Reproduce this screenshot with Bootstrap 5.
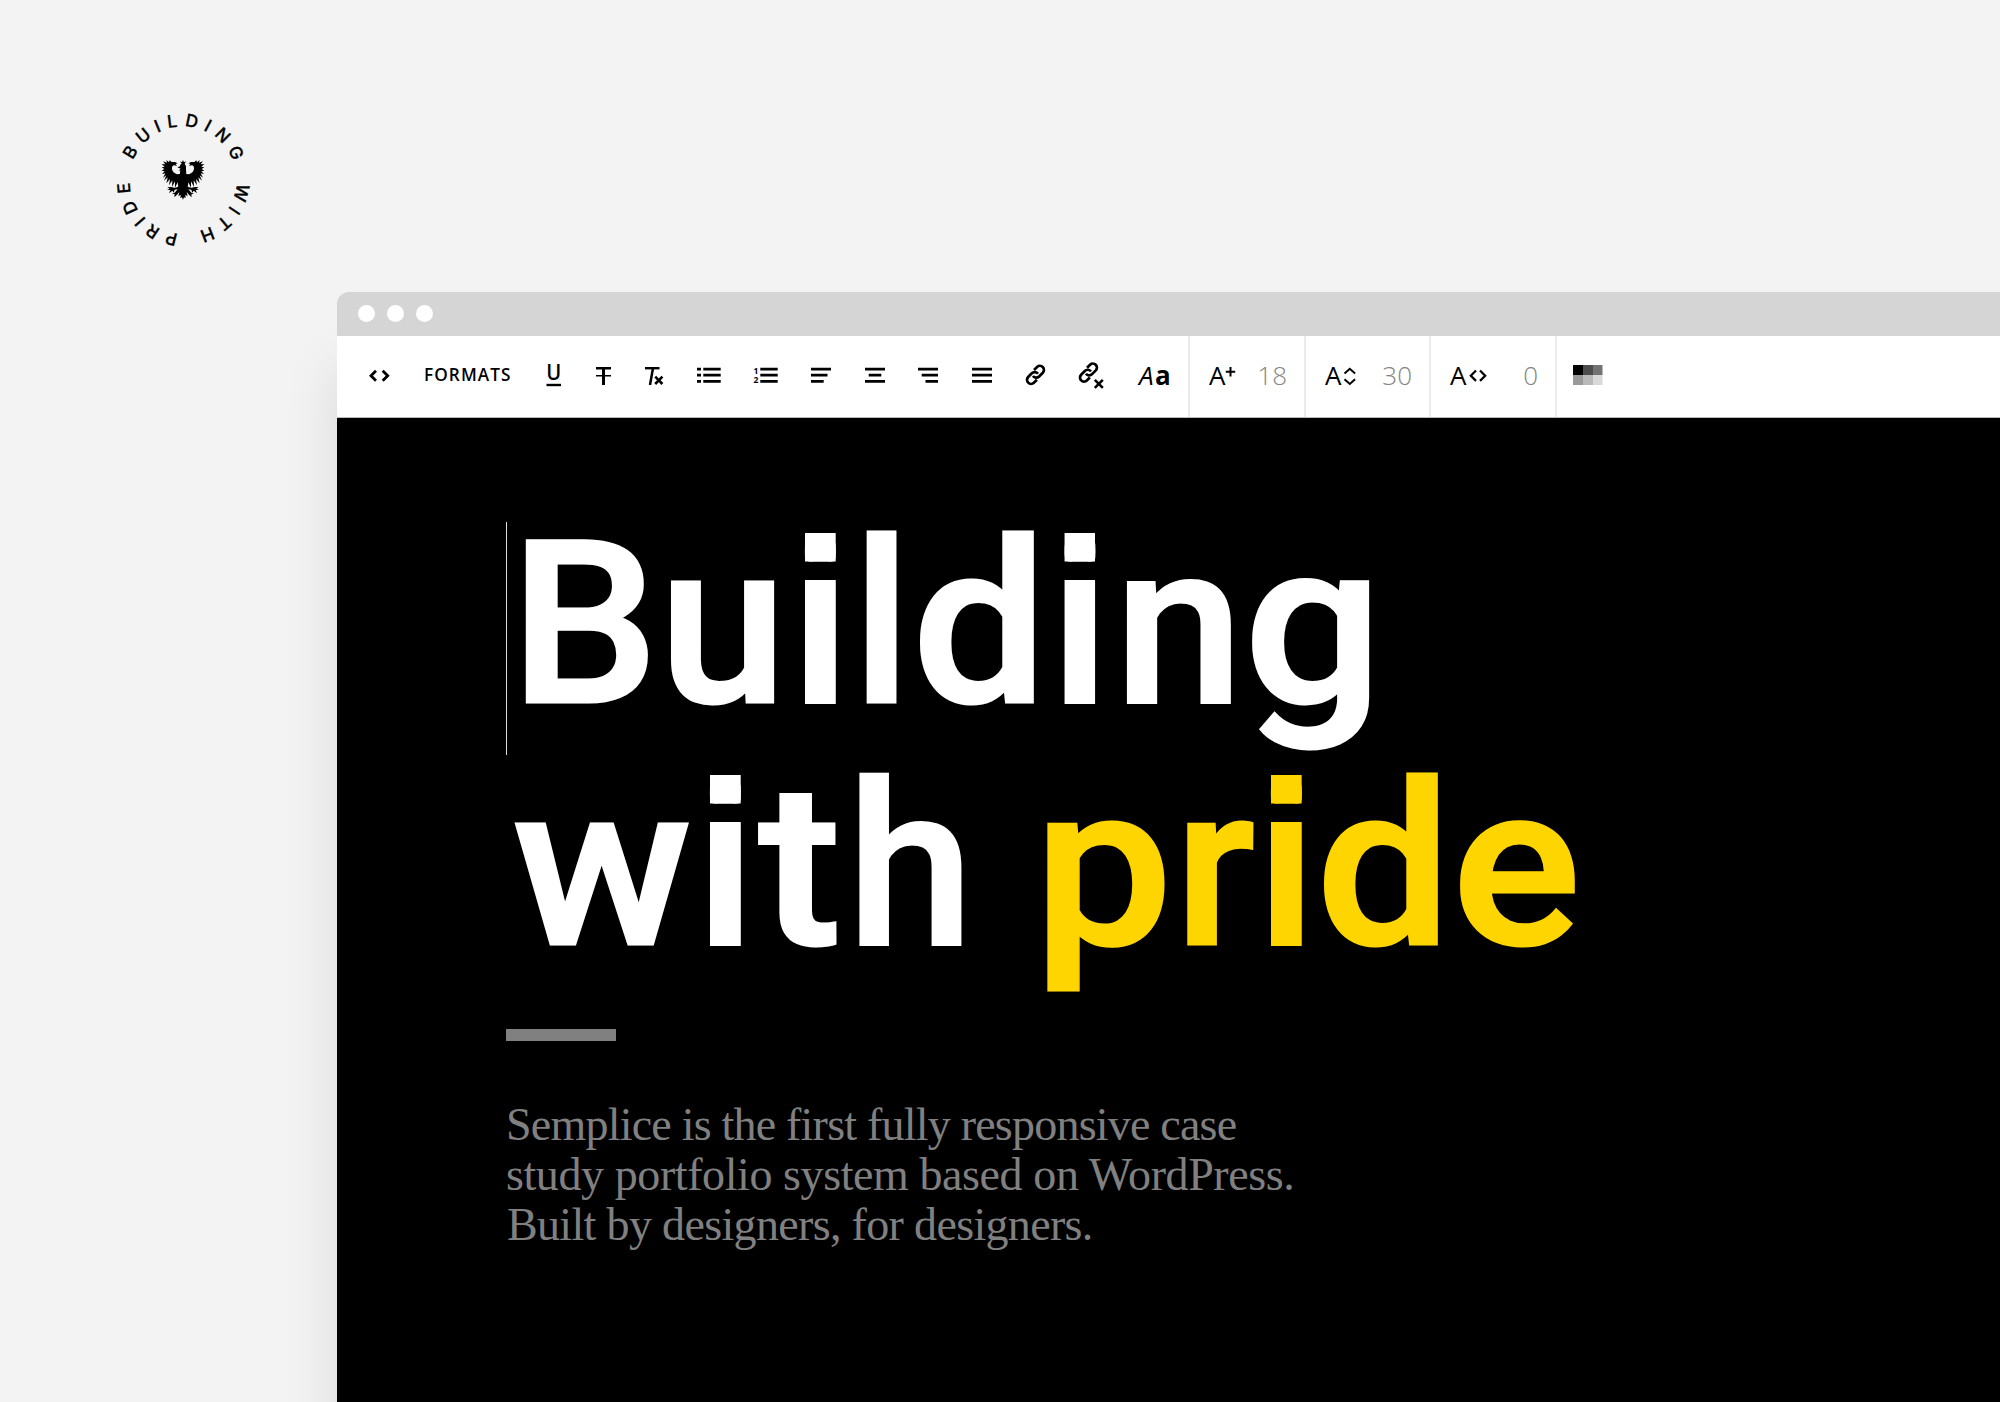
<!DOCTYPE html>
<html lang="en">
<head>
<meta charset="utf-8">
<meta name="viewport" content="width=device-width, initial-scale=1">
<title>Building with pride</title>
<link href="https://cdn.jsdelivr.net/npm/bootstrap@5.3.0/dist/css/bootstrap.min.css" rel="stylesheet">
<script src="https://cdn.jsdelivr.net/npm/bootstrap@5.3.0/dist/js/bootstrap.bundle.min.js"></script>
<style>
body{background:#f3f3f3;width:2000px;height:1402px;overflow:hidden;font-family:"Open Sans",sans-serif;color:#000}
.brand-area{height:292px;padding:110px 0 0 113px}
.seal{display:block;font:500 17.4px Inter,sans-serif}
.browser{margin-left:337px;height:1110px;border-top-left-radius:12px;box-shadow:0 75px 56px rgba(0,0,0,.11)}
.titlebar{height:44px;background:#d5d5d5;border-top-left-radius:12px;padding:0 0 1px 21px;gap:12px}
.dot{width:17px;height:17px;background:#fff}
.tools{height:82px;border-bottom:1px solid #b9b9b9}
.tools svg{display:block;overflow:visible;flex:none;margin-bottom:1px}
.tool-group{gap:34px;padding-left:32px;width:851px}
.tool-btn{background:none;border:0;padding:0;color:#000;line-height:1}
.formats{font-weight:600;font-size:17.2px;letter-spacing:1.08px;width:88px;padding-bottom:4px;text-align:left;white-space:nowrap}
.glyph{font-size:26px;padding-bottom:4px;line-height:1}
.aa{width:32px;white-space:nowrap}
.aa b{margin-left:1.5px}
.value{font-size:26px;font-weight:300;color:#858585;padding-bottom:4px;line-height:1}
.field{border-left:2px solid #ebebeb;padding:0 17px 0 19px}
.f-size{width:116px}.f-line{width:125px}.f-track{width:126px}
.stage{height:984px;padding:86px 0 0 169px}
.headline{font:500 226px/242px Roboto,sans-serif;-webkit-text-stroke:3px currentColor;color:#fff;margin:0;position:relative;white-space:pre}
.headline .caret{position:absolute;left:0;top:18px;width:1px;height:233px;background:#ddd}
.line-a{padding-left:7.1px}.line-b{padding-left:11.5px}
.line-a,.line-b{display:block;height:242px}
.yellow{color:#ffd500}
.ch{display:inline-block;width:var(--w);transform:scaleX(var(--s,1));transform-origin:var(--o,50%) 50%}
.c-B{--w:146.8px;--s:1.035;--o:73.7px}.c-u{--w:131.9px;--s:1.01}.c-l{--w:62.9px}.c-n{--w:133.6px;--s:1.02}.c-h{--w:136.6px}
.c-d{--w:135.9px;--s:1.06;--o:60.9px}.c-g{--w:131px;--s:1.08;--o:61.9px}
.c-w{--w:179.3px;--s:1.067;--o:83.5px}.c-t{--w:85.5px;--s:1.1;--o:35.4px}
.c-p{--w:134.6px;--s:1.09;--o:66.3px}.c-r{--w:82.8px;--o:45.7px}.c-e{--w:124px;--s:1.06;--o:61.9px}
.c-i{--w:60.9px;position:relative;clip-path:polygon(13.1px 0,43.9px 0,43.9px 57.5px,13.1px 57.5px,13.1px 65px,43.9px 65px,43.9px 242px,13.1px 242px)}
.c-i::before,.c-i::after{content:"";position:absolute;left:13px;top:29px;width:31px;height:28.5px;background:currentColor}
.c-i::after{top:76px;height:124px}
.i-wide{--w:64.3px}.i-with{--w:65.3px}.i-mid{--w:62.4px}
.rule{width:110px;height:12px;background:#808080;margin-top:41px}
.intro{font:46px/50px "Liberation Serif",serif;color:#808080;margin:59px 0 0;white-space:nowrap}
.intro span{display:block}
.p1{letter-spacing:-.78px}.p2{letter-spacing:-.41px}.p3{letter-spacing:-.66px;padding-left:1px}
</style>
</head>
<body>
<header class="brand-area">
<svg class="seal" width="140" height="140" viewBox="0 0 140 140">
<defs>
<path id="from-bottom" d="M70 123.5a53.5 53.5 0 0 1 0-107a53.5 53.5 0 0 1 0 107"/>
<path id="from-top" d="M70 16.5a53.5 53.5 0 0 1 0 107a53.5 53.5 0 0 1 0-107"/>
</defs>
<g text-anchor="middle" letter-spacing="6.6" stroke="#000" stroke-width=".3">
<text><textPath href="#from-bottom" startOffset="171.4">BUILDING</textPath></text>
<text letter-spacing="6.2"><textPath href="#from-top" startOffset="122">WITH</textPath></text>
<text><textPath href="#from-top" startOffset="214">PRIDE</textPath></text>
</g>
<g transform="translate(70 -10) scale(.3333)">
<g id="wing"><path d="M0 222L-9 222L-18 223Q-31 218-33 207Q-34 197-26 196L-18 198L-22 192L-16 190L-24 186L-34 186L-40 181L-42 187L-50 180L-48 188L-60 184L-53 193L-64 192L-55 200L-64 202L-56 207L-64 212L-55 214L-63 222L-53 220L-60 233L-50 226L-57 242L-46 232L-50 250L-39 237L-42 256L-32 241L-33 261L-24 244L-24 263L-16 247L-14 262Q-6 264 0 280Z"/>
<path d="M-5 250Q-12 264-26 263L-36 261L-47 262L-40 266L-48 270L-38 270L-42 280L-32 272L-28 278L-25 269L-16 268L-25 278L-33 281L-25 283L-26 292L-18 284L-11 276L-14 289L-7 284L-8 294L-3 292L0 299L0 250Z"/></g>
<use href="#wing" transform="scale(-1 1)"/>
<path d="M-10 225L-8 211L-14 212L-7 206L-17 202L-9 199Q-10 193-4 191L-9 184L-3 187L0 180L3 187L9 184L5 192Q11 197 9 207L10 225Z"/>
</g>
</svg>
</header>
<main class="browser">
<div class="titlebar d-flex align-items-center"><span class="dot rounded-circle"></span><span class="dot rounded-circle"></span><span class="dot rounded-circle"></span></div>
<nav class="tools bg-white d-flex align-items-stretch">
<div class="tool-group d-flex align-items-center">
<button class="tool-btn" aria-label="Code"><svg width="21" height="31" fill="none" stroke="#000" stroke-width="2.8"><path d="M7 9.800L2 14.800l5 5M13.700 9.800l5 5l-5 5"/></svg></button>
<button class="tool-btn formats">FORMATS</button>
<button class="tool-btn" aria-label="Underline"><svg width="16" height="31"><text x=".2" y="18.800" font-family="Open Sans" font-weight="600" font-size="21.500" textLength="15" lengthAdjust="spacingAndGlyphs">U</text><path d="M.5 22.800h14.500v2.400H.5z"/></svg></button>
<button class="tool-btn" aria-label="Strikethrough"><svg width="15" height="31"><path d="M0 6h15v2.500H9V14h6v1.600H9V24H6v-8.400H0V14h6V8.500H0z"/></svg></button>
<button class="tool-btn" aria-label="Clear format"><svg width="18" height="31" fill="none" stroke="#000"><path d="M0 7.200h14.500" stroke-width="2.400"/><path d="M8 7L5 24" stroke-width="2.500"/><path d="M10.200 15.700l7.200 7.300m0-7.300L10.200 23" stroke-width="2.600"/></svg></button>
<button class="tool-btn" aria-label="Bulleted list"><svg width="23" height="31"><path d="M0 6.700h4v2.700H0zM0 12.800h4v2.700H0zM0 19h4v2.700H0zM6.300 6.700h17.400v2.700H6.300zM6.300 12.800h17.400v2.700H6.300zM6.300 19h17.400v2.700H6.300z"/></svg></button>
<button class="tool-btn" aria-label="Numbered list"><svg width="23" height="31"><text font-family="Open Sans" font-weight="700" font-size="8.500"><tspan x="-.5" y="13">1</tspan><tspan x="-.5" y="22">2</tspan></text><path d="M6.300 6.700h17.400v2.700H6.300zM6.300 12.800h17.400v2.700H6.300zM6.300 19h17.400v2.700H6.300z"/></svg></button>
<button class="tool-btn" aria-label="Align left"><svg width="20" height="31"><path d="M0 6.700h20v2.700H0zM0 12.800h16.500v2.700H0zM0 19h12.700v2.700H0z"/></svg></button>
<button class="tool-btn" aria-label="Align center"><svg width="19" height="31"><path d="M0 6.700h20v2.700H0zM3.700 12.800h12.600v2.700H3.700zM0 19h20v2.700H0z"/></svg></button>
<button class="tool-btn" aria-label="Align right"><svg width="20" height="31"><path d="M0 6.700h20v2.700H0zM3.700 12.800H20v2.700H3.700zM7.500 19H20v2.700H7.500z"/></svg></button>
<button class="tool-btn" aria-label="Justify"><svg width="20" height="31"><path d="M0 6.700h20v2.700H0zM0 12.800h20v2.700H0zM0 19h20v2.700H0z"/></svg></button>
<button class="tool-btn" aria-label="Link"><svg width="19" height="31" fill="none" stroke="#000" stroke-width="2.900"><g id="chain" transform="translate(-1.700 2.700) scale(.93)"><path d="M9.300 13.200a4.300 4.300 0 0 0 6.600.5l4-4a4.350 4.350 0 0 0-6.150-6.150l-3.300 3.200"/><path d="M14.700 10.800a4.300 4.300 0 0 0-6.600-.5l-4 4a4.350 4.350 0 0 0 6.150 6.150l3.300-3.200"/></g></svg></button>
<button class="tool-btn" aria-label="Unlink"><svg width="26" height="31" fill="none" stroke="#000" stroke-width="2.900"><use href="#chain" y="-2.300"/><path d="M15.800 18.800l8 8m0-8l-8 8" stroke-width="2.600"/></svg></button>
<span class="glyph aa"><i>A</i><b>a</b></span>
</div>
<div class="field f-size d-flex align-items-center"><span class="glyph">A</span><svg width="11" height="31" fill="none" stroke="#000" stroke-width="2"><path d="M.8 10.700h9.400M5.500 6v9.400"/></svg><span class="value ms-auto">18</span></div>
<div class="field f-line d-flex align-items-center"><span class="glyph">A</span><svg width="16" height="31" fill="none" stroke="#000" stroke-width="2"><path d="M3.500 12.500l5.300-4.700l5.300 4.700M3.500 18.200l5.300 4.700l5.300-4.700"/></svg><span class="value ms-auto">30</span></div>
<div class="field f-track d-flex align-items-center"><span class="glyph">A</span><svg width="22" height="31" fill="none" stroke="#000" stroke-width="2.200"><path d="M10 9.500L4.800 14.700L10 19.900M14 9.500l5.200 5.200L14 19.900"/></svg><span class="value ms-auto">0</span></div>
<div class="field d-flex align-items-center p-0">
<svg class="ms-3" width="30" height="31"><path d="M0 4h10v10H0z"/><path d="M10 4h10v10H10z" fill="#4d4d4d"/><path d="M20 4h9.500v10H20z" fill="#737373"/><path d="M0 14h10v10H0z" fill="#999"/><path d="M10 14h10v10H10z" fill="#b9b9b9"/><path d="M20 14h9.500v10H20z" fill="#d9d9d9"/></svg>
</div>
</nav>
<section class="stage bg-black">
<h1 class="headline"><span class="caret"></span><span class="line-a"><span class="ch c-B">B</span><span class="ch c-u">u</span><span class="ch c-i">i</span><span class="ch c-l">l</span><span class="ch c-d">d</span><span class="ch c-i i-wide">i</span><span class="ch c-n">n</span><span class="ch c-g">g</span></span><span class="line-b"><span class="ch c-w">w</span><span class="ch c-i i-with">i</span><span class="ch c-t">t</span><span class="ch c-h">h</span> <span class="yellow"><span class="ch c-p">p</span><span class="ch c-r">r</span><span class="ch c-i i-mid">i</span><span class="ch c-d">d</span><span class="ch c-e">e</span></span></span></h1>
<div class="rule"></div>
<p class="intro"><span class="p1">Semplice is the first fully responsive case</span><span class="p2">study portfolio system based on WordPress.</span><span class="p3">Built by designers, for designers.</span></p>
</section>
</main>
</body>
</html>
